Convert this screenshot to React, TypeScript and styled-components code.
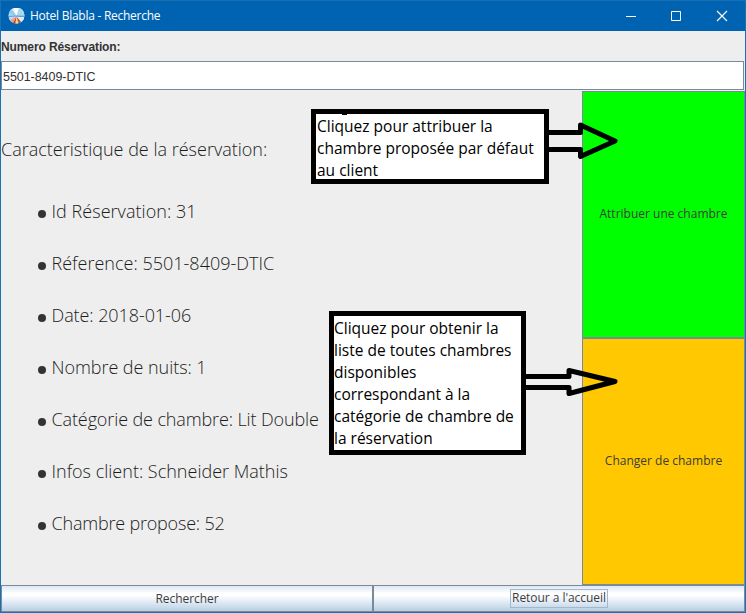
import React from "react";
import styled, { createGlobalStyle } from "styled-components";

const Global = createGlobalStyle`
  * { box-sizing: border-box; }
  body { margin: 0; background: #eee; overflow: hidden; }
`;

const light = `font-family: "Open Sans", "Noto Sans", sans-serif; font-weight: 300; color: #1c1c1c;`;
const buttonText = `font-family: "Open Sans", "Noto Sans", sans-serif; font-weight: 400; font-size: 12px; color: #3c3c3c;`;

const Window = styled.div`
  position: relative;
  width: 746px;
  height: 613px;
  display: grid;
  grid-template-rows: 30px 30px 30px 494px 27px;
  border: 1px solid #1a70b5;
  background: #eee;
`;

const TitleBar = styled.header`
  display: flex;
  align-items: center;
  background: #0063b1;
  color: #fff;
  padding-left: 7px;
`;

const Title = styled.h1`
  flex: 1;
  margin: 0 0 0 5px;
  font: 400 12px/30px "Open Sans", sans-serif;
  letter-spacing: -0.26px;
`;

const WindowControls = styled.div`
  display: flex;
  gap: 31px;
  padding-right: 16px;
`;

const FieldLabel = styled.label`
  font: 700 12px/33px "Liberation Sans", Arial, sans-serif;
  color: #333;
  letter-spacing: -0.1px;
`;

const Field = styled.input`
  width: 743px;
  height: 29px;
  margin: 0;
  padding: 2px 0 0 1px;
  border: 1px solid #7a8a99;
  border-radius: 0;
  outline: 0;
  background: #fff;
  font: 400 12.5px "Liberation Sans", Arial, sans-serif;
  letter-spacing: -0.05px;
  color: #333;
`;

const Body = styled.main`
  display: grid;
  grid-template-columns: 581px 163px;
`;

const Details = styled.section`
  padding-top: 43px;
`;

const Heading = styled.h2`
  margin: 0 0 38px;
  height: 26px;
  ${light}
  font-size: 18px;
  line-height: 30px;
  white-space: nowrap;
`;

const List = styled.ul`
  margin: 0;
  padding: 0 0 0 37px;
  list-style: none;
  display: flex;
  flex-direction: column;
  gap: 26px;
`;

const Item = styled.li<{ $tracking: number }>`
  display: flex;
  align-items: center;
  height: 26px;
  ${light}
  font-size: 18px;
  white-space: nowrap;
  letter-spacing: ${(p) => p.$tracking}px;

  &::before {
    content: "";
    width: 8px;
    height: 8px;
    margin: 5px 5.5px 0 0;
    border-radius: 4px;
    background: #333;
  }
`;

const Actions = styled.aside`
  display: grid;
  grid-template-rows: 1fr 1fr;
`;

const ActionButton = styled.button<{ $fill: string }>`
  padding: 0 0 2px;
  border: 1px solid #7a8a99;
  background: ${(p) => p.$fill};
  ${buttonText}
  letter-spacing: 0;
`;

const Footer = styled.footer`
  display: grid;
  grid-template-columns: 372px 372px;
`;

const FooterButton = styled.button`
  display: flex;
  align-items: center;
  justify-content: center;
  padding: 0 0 1px;
  border: 1px solid #7a8a99;
  background: linear-gradient(#dde8f3 0%, #fff 30%, #fff 38%, #b8cfe5 100%);
  ${buttonText}
  letter-spacing: -0.05px;
`;

const FocusLabel = styled.span`
  width: 98px;
  height: 19px;
  border: 1px solid #a3b8cc;
  line-height: 16px;
`;

const Callout = styled.div<{ $x: number; $y: number; $w: number; $h: number; $indent: number }>`
  position: absolute;
  left: ${(p) => p.$x - 1}px;
  top: ${(p) => p.$y - 1}px;
  width: ${(p) => p.$w}px;
  height: ${(p) => p.$h}px;
  padding: 1px 0 0 ${(p) => p.$indent}px;
  border: 5px solid #000;
  background: #fff;
  color: #000;
  font: 400 15.5px/22px "Open Sans", sans-serif;
  white-space: nowrap;
`;

const Speck = styled.span`
  position: absolute;
  left: 26px;
  top: 0;
  width: 5px;
  height: 1px;
  background: #000;
`;

const Arrow = styled.svg<{ $x: number; $y: number }>`
  position: absolute;
  left: ${(p) => p.$x - 1}px;
  top: ${(p) => p.$y - 1}px;
`;

const details: [string, number][] = [
  ["Id Réservation: 31", 0.04],
  ["Réference: 5501-8409-DTIC", 0.01],
  ["Date: 2018-01-06", -0.08],
  ["Nombre de nuits: 1", -0.05],
  ["Catégorie de chambre: Lit Double", -0.12],
  ["Infos client: Schneider Mathis", 0],
  ["Chambre propose: 52", -0.2],
];

const attribuer = ["Cliquez pour attribuer la", "chambre proposée par défaut", "au client"];

const changer = [
  "Cliquez pour obtenir la",
  "liste de toutes chambres",
  "disponibles",
  "correspondant à la",
  "catégorie de chambre de",
  "la réservation",
];

const AppIcon = () => (
  <svg width="17" height="17" viewBox="0 0 17 17">
    <defs>
      <clipPath id="disc"><circle cx="8.5" cy="7.500" r="8" /></clipPath>
    </defs>
    <g clipPath="url(#disc)">
      <rect width="17" height="17" fill="#e3f0f8" />
      <path d="M8.500 8 3 0H0v6z" fill="#8fcdec" />
      <path d="M8.500 8 6 0h5z" fill="#fff" />
      <path d="M8.500 8 11 0h6v7z" fill="#a9d8ef" />
      <path d="M0 7.500h17V9H0z" fill="#5b9fdc" />
      <path d="M8.500 8.500 0 9v4z" fill="#c3d7ee" />
      <path d="M8.500 8.500 0 13l4 4z" fill="#e5a08e" />
      <path d="M8.500 8.500 4 17h4z" fill="#c63a3a" />
      <path d="M8.500 8.500 7 17h4z" fill="#f6dc62" />
      <path d="M8.500 8.500 11 17l4-3z" fill="#a5506b" />
      <path d="M8.500 8.500 14 15l3-5z" fill="#e4e6f2" />
    </g>
  </svg>
);

export default function App() {
  return (
    <>
      <Global />
      <Window>
        <TitleBar>
          <AppIcon />
          <Title>Hotel Blabla - Recherche</Title>
          <WindowControls>
            <svg width="14" height="14" viewBox="0 0 14 14"><path d="M1 7.500h10" stroke="#fff" /></svg>
            <svg width="14" height="14" viewBox="0 0 14 14"><path d="M1.500 2.500h9v9h-9z" stroke="#fff" fill="none" /></svg>
            <svg width="14" height="14" viewBox="0 0 14 14"><path d="m2 2 10 10M12 2 2 12" stroke="#fff" strokeWidth="1.200" /></svg>
          </WindowControls>
        </TitleBar>
        <FieldLabel htmlFor="numero">Numero Réservation:</FieldLabel>
        <Field id="numero" defaultValue="5501-8409-DTIC" />
        <Body>
          <Details>
            <Heading>Caracteristique de la réservation:</Heading>
            <List>
              {details.map(([text, tracking]) => (
                <Item key={text} $tracking={tracking}>{text}</Item>
              ))}
            </List>
          </Details>
          <Actions>
            <ActionButton $fill="#00ff00">Attribuer une chambre</ActionButton>
            <ActionButton $fill="#ffc800">Changer de chambre</ActionButton>
          </Actions>
        </Body>
        <Footer>
          <FooterButton>Rechercher</FooterButton>
          <FooterButton><FocusLabel>Retour a l'accueil</FocusLabel></FooterButton>
        </Footer>
        <Callout $x={311} $y={109} $w={238} $h={75} $indent={1}>
          <Speck />
          {attribuer.map((text) => <div key={text}>{text}</div>)}
        </Callout>
        <Callout $x={329} $y={311} $w={197} $h={144} $indent={0}>
          {changer.map((text) => <div key={text}>{text}</div>)}
        </Callout>
        <Arrow $x={547} $y={120} width="72" height="42" viewBox="0 0 72 42" fill="none" stroke="#000" strokeWidth="5">
          <path d="M0 12.500h33.500V5L68 21 33.500 36.500V29.500H0" strokeLinejoin="round" />
        </Arrow>
        <Arrow $x={524} $y={366} width="96" height="32" viewBox="0 0 96 32" fill="none" stroke="#000" strokeWidth="5">
          <path d="M0 10.500h45V4.500L91 15.500 45 27.500V21.500H0" strokeLinejoin="round" />
        </Arrow>
      </Window>
    </>
  );
}
